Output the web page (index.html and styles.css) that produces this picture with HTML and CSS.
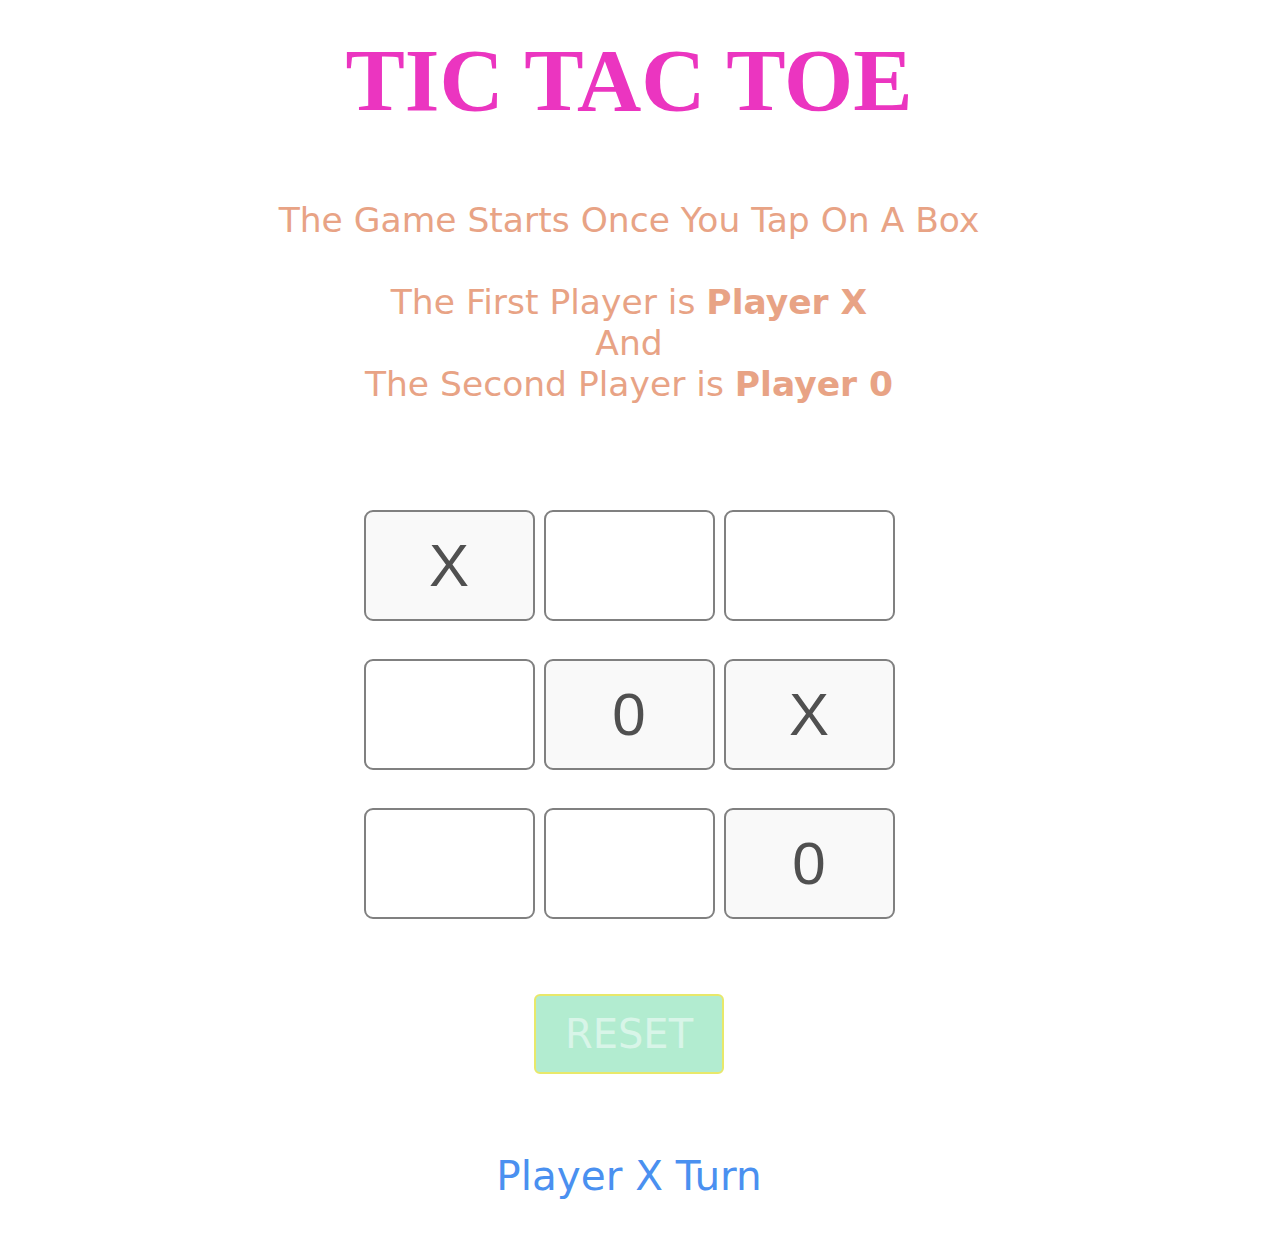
FILE: index.html
```html
<!DOCTYPE html>
<html>
<head>
<meta charset="utf-8">
<link rel="stylesheet" href="styles.css">
</head>
<body>
<div class="page">
  <h1 class="title">TIC TAC TOE</h1>
  <p class="intro">The Game Starts Once You Tap On A Box<br><br>The First Player is <b>Player X</b><br>And<br>The Second Player is <b>Player 0</b></p>
  <div class="board">
    <div class="cell filled">X</div>
    <div class="cell"></div>
    <div class="cell"></div>
    <div class="cell"></div>
    <div class="cell filled">0</div>
    <div class="cell filled">X</div>
    <div class="cell"></div>
    <div class="cell"></div>
    <div class="cell filled">0</div>
  </div>
  <button class="reset">RESET</button>
  <p class="status">Player X Turn</p>
</div>
</body>
</html>
```
FILE: styles.css
```css
body {
  margin: 0;
  background: #ffffff;
}
.page {
  display: flex;
  flex-direction: column;
  align-items: center;
  padding-right: 10px;
  font-family: "DejaVu Sans", Verdana, sans-serif;
}
.title {
  font-family: "Liberation Serif", "Times New Roman", serif;
  font-weight: bold;
  font-size: 89px;
  color: #eb35c0;
  margin: 29px 0 0;
  line-height: 1.15;
}
.intro {
  color: #e8a385;
  font-size: 34.5px;
  line-height: 41px;
  text-align: center;
  margin: 69px 0 0;
}
.board {
  display: grid;
  grid-template-columns: repeat(3, 171px);
  grid-auto-rows: 111px;
  column-gap: 9px;
  row-gap: 38px;
  margin-top: 105px;
}
.cell {
  box-sizing: border-box;
  border: 2px solid #808080;
  border-radius: 9px;
  background: #ffffff;
  display: flex;
  align-items: center;
  justify-content: center;
  font-family: "Liberation Sans", Arial, sans-serif;
  font-size: 60px;
  color: #505050;
}
.cell.filled {
  background: #f9f9f9;
}
.reset {
  box-sizing: border-box;
  width: 190px;
  height: 80px;
  margin-top: 75px;
  background: #b2ecd0;
  border: 2px solid #e8e86a;
  border-radius: 6px;
  color: #d8f5e8;
  font-family: "DejaVu Sans", Verdana, sans-serif;
  font-size: 40px;
  padding: 0;
}
.status {
  color: #4a90f0;
  font-size: 40.5px;
  margin: 78px 0 0;
}
```
